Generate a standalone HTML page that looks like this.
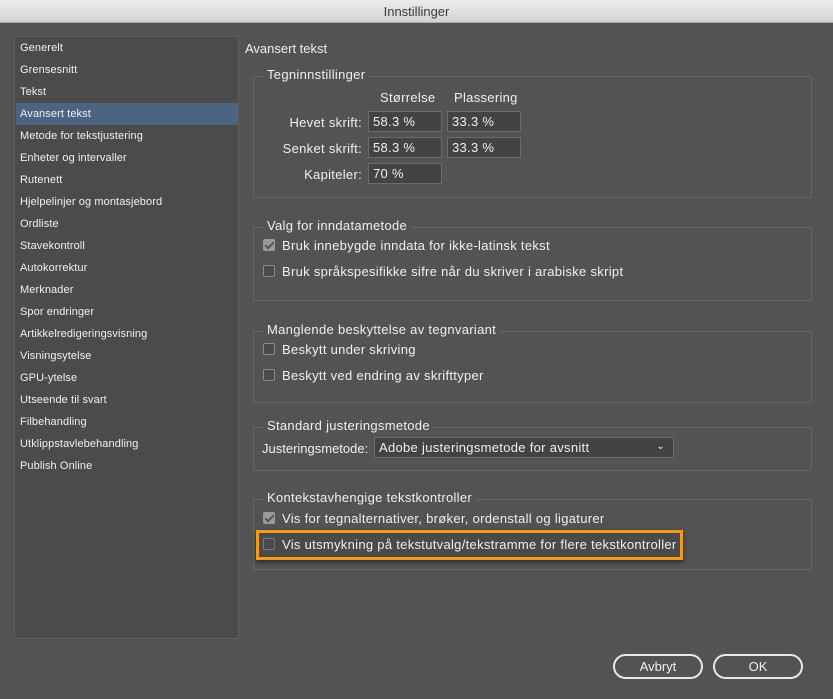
<!DOCTYPE html>
<html><head><meta charset="utf-8"><style>
*{margin:0;padding:0;box-sizing:border-box}
body{width:833px;height:699px;background:#535353;font-family:"Liberation Sans",sans-serif;color:#f0f0f0;position:relative;overflow:hidden;font-size:13px;letter-spacing:0.3px}
.a{position:absolute;white-space:nowrap}
#title{left:0;top:0;width:833px;height:23px;background:linear-gradient(#ececec,#d4d4d4);border-bottom:1px solid #a8a8a8;color:#3a3a3a;font-size:13px;text-align:center;line-height:23px;letter-spacing:0}
#side{left:14px;top:36px;width:225px;height:603px;background:#4b4b4b;border:1px solid #5f5f5f}
.it{position:absolute;left:5px;font-size:11px;height:22px;line-height:23px;letter-spacing:0.1px}
.sel{left:1px;width:222px;padding-left:4px;background:#4a6482}
.grp{position:absolute;border:1px solid #666;border-radius:2px}
.gt{position:absolute;background:#535353;padding:0 4px;line-height:14px}
.inp{position:absolute;width:74px;height:21px;background:#434343;border:1px solid #6c6c6c;line-height:20px;padding-left:4px}
.lbl{position:absolute;right:471px;white-space:nowrap}
.cb{position:absolute;width:12px;height:12px;border:1px solid #8a8a8a;border-radius:2px;background:#4a4a4a}
.cb.on{background:#9a9a9a;border-color:#9a9a9a}
.cb.on::after{content:"";position:absolute;left:3px;top:0px;width:3px;height:7px;border:solid #555;border-width:0 2px 2px 0;transform:rotate(45deg)}
.btn{position:absolute;height:25px;border:2px solid #e8e8e8;border-radius:13px;text-align:center;line-height:21px;font-size:13px;letter-spacing:0}
</style></head><body>
<div class="a" id="title">Innstillinger</div>
<div class="a" id="side">
<div class="it" style="top:0">Generelt</div>
<div class="it" style="top:22px">Grensesnitt</div>
<div class="it" style="top:44px">Tekst</div>
<div class="it sel" style="top:66px">Avansert tekst</div>
<div class="it" style="top:88px">Metode for tekstjustering</div>
<div class="it" style="top:110px">Enheter og intervaller</div>
<div class="it" style="top:132px">Rutenett</div>
<div class="it" style="top:154px">Hjelpelinjer og montasjebord</div>
<div class="it" style="top:176px">Ordliste</div>
<div class="it" style="top:198px">Stavekontroll</div>
<div class="it" style="top:220px">Autokorrektur</div>
<div class="it" style="top:242px">Merknader</div>
<div class="it" style="top:264px">Spor endringer</div>
<div class="it" style="top:286px">Artikkelredigeringsvisning</div>
<div class="it" style="top:308px">Visningsytelse</div>
<div class="it" style="top:330px">GPU-ytelse</div>
<div class="it" style="top:352px">Utseende til svart</div>
<div class="it" style="top:374px">Filbehandling</div>
<div class="it" style="top:396px">Utklippstavlebehandling</div>
<div class="it" style="top:418px">Publish Online</div>
</div>
<div class="a" style="left:245px;top:41px;font-size:13px;letter-spacing:0">Avansert tekst</div>

<div class="grp" style="left:253px;top:76px;width:559px;height:122px"></div>
<div class="a gt" style="left:263px;top:68px">Tegninnstillinger</div>
<div class="a" style="left:380px;top:90px">Størrelse</div>
<div class="a" style="left:454px;top:90px">Plassering</div>
<div class="lbl" style="top:115px">Hevet skrift:</div>
<div class="lbl" style="top:141px">Senket skrift:</div>
<div class="lbl" style="top:167px">Kapiteler:</div>
<div class="inp" style="left:368px;top:111px">58.3 %</div>
<div class="inp" style="left:447px;top:111px">33.3 %</div>
<div class="inp" style="left:368px;top:137px">58.3 %</div>
<div class="inp" style="left:447px;top:137px">33.3 %</div>
<div class="inp" style="left:368px;top:163px">70 %</div>

<div class="grp" style="left:253px;top:227px;width:559px;height:74px"></div>
<div class="a gt" style="left:263px;top:219px">Valg for inndatametode</div>
<div class="cb on" style="left:263px;top:239px"></div>
<div class="a" style="left:282px;top:238px">Bruk innebygde inndata for ikke-latinsk tekst</div>
<div class="cb" style="left:263px;top:265px"></div>
<div class="a" style="left:282px;top:264px">Bruk språkspesifikke sifre når du skriver i arabiske skript</div>

<div class="grp" style="left:253px;top:331px;width:559px;height:72px"></div>
<div class="a gt" style="left:263px;top:323px">Manglende beskyttelse av tegnvariant</div>
<div class="cb" style="left:263px;top:343px"></div>
<div class="a" style="left:282px;top:342px">Beskytt under skriving</div>
<div class="cb" style="left:263px;top:369px"></div>
<div class="a" style="left:282px;top:368px">Beskytt ved endring av skrifttyper</div>

<div class="grp" style="left:253px;top:427px;width:559px;height:44px"></div>
<div class="a gt" style="left:263px;top:419px">Standard justeringsmetode</div>
<div class="a" style="left:262px;top:441px;letter-spacing:0">Justeringsmetode:</div>
<div class="inp" style="left:374px;top:437px;width:300px;height:21px;padding-left:4px">Adobe justeringsmetode for avsnitt<span style="position:absolute;right:8px;top:-1px;font-size:10px">⌄</span></div>

<div class="grp" style="left:253px;top:499px;width:559px;height:71px"></div>
<div class="a gt" style="left:263px;top:491px">Kontekstavhengige tekstkontroller</div>
<div class="cb on" style="left:263px;top:512px"></div>
<div class="a" style="left:282px;top:511px">Vis for tegnalternativer, brøker, ordenstall og ligaturer</div>
<div class="a" style="left:256px;top:530px;width:427px;height:30px;border:3px solid #f09a1e;background:#4a4a4a;box-shadow:0 2px 4px rgba(0,0,0,.5)"></div>
<div class="cb" style="left:263px;top:538px;border-color:#6a7a90"></div>
<div class="a" style="left:282px;top:537px">Vis utsmykning på tekstutvalg/tekstramme for flere tekstkontroller</div>

<div class="btn" style="left:613px;top:654px;width:90px">Avbryt</div>
<div class="btn" style="left:713px;top:654px;width:90px">OK</div>
</body></html>
